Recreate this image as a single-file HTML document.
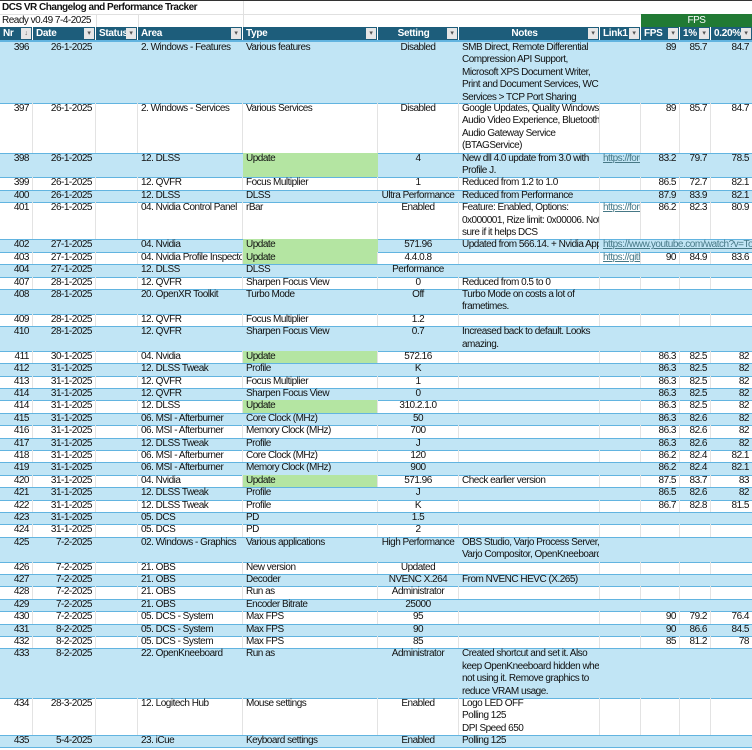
<!DOCTYPE html>
<html><head><meta charset="utf-8">
<style>
*{box-sizing:border-box;margin:0;padding:0}
body{width:752px;height:750px;overflow:hidden;background:#fff;font-family:"Liberation Sans",sans-serif;font-size:10px;color:#111;letter-spacing:-0.5px;position:relative}
.r{display:flex;position:relative;height:12.4px;border-top:1px solid #62b4e0;line-height:12.4px}
.b{background:#c1e5f5}
.w{background:#fff}
.r>div{flex:none;overflow:hidden;white-space:nowrap;padding:0 3px;border-right:1px solid transparent;margin-top:-1px}
.w>div{border-right-color:#e3e3e3!important}
.a{width:33px;text-align:right}
.d{width:63px;text-align:right}
.s{width:42px}
.e{width:105px}
.t{width:135px}
.g{width:81px;text-align:center}
.n{width:141px}
.l{width:41px}
.f{width:39px;text-align:right}
.p{width:31px;text-align:right}
.q{width:41px;text-align:right;border-right:none!important}
.u{background:#b4e5a2}
.lk{color:#467886;text-decoration:underline}
.ov{overflow:visible!important;position:relative;z-index:2}
.top{position:absolute;left:0;width:752px;height:13.5px;border-bottom:1px solid #e0e0e0;line-height:13px}
.hdr{position:absolute;left:0;top:27px;height:13px;width:752px;display:flex;background:#fff}
.hdr>div{flex:none;background:#1d5d7b;color:#fff;font-weight:bold;line-height:13px;padding:0 3px;position:relative;border-right:1px solid #fff;letter-spacing:-0.3px}
.fb{position:absolute;right:1px;top:1px;width:10px;height:11px;background:#e6e6e6;color:#555;font-size:7px;line-height:11px;text-align:center;font-weight:normal}
</style></head><body>
<div style="position:absolute;left:0;top:0;width:752px;height:1px;background:#333"></div>
<div class="top" style="top:1px;font-weight:bold;padding-left:2px">DCS VR Changelog and Performance Tracker</div>
<div class="top" style="top:14px;padding-left:2px">Ready v0.49 7-4-2025</div>
<div style="position:absolute;left:243px;top:1px;width:1px;height:26px;background:#e0e0e0"></div>
<div style="position:absolute;left:96px;top:14px;width:1px;height:13px;background:#e0e0e0"></div>
<div style="position:absolute;left:138px;top:14px;width:1px;height:13px;background:#e0e0e0"></div>
<div style="position:absolute;left:641px;top:14px;width:111px;height:13px;background:#217a34;color:#fff;text-align:center;line-height:13px">FPS</div>
<div class="hdr">
<div style="width:33px">Nr<span class="fb">↓</span></div>
<div style="width:63px">Date<span class="fb">▾</span></div>
<div style="width:42px">Status<span class="fb">▾</span></div>
<div style="width:105px">Area<span class="fb">▾</span></div>
<div style="width:135px">Type<span class="fb">▾</span></div>
<div style="width:81px;text-align:center;padding-right:12px">Setting<span class="fb">▾</span></div>
<div style="width:141px;text-align:center;padding-right:12px">Notes<span class="fb">▾</span></div>
<div style="width:41px">Link1<span class="fb">▾</span></div>
<div style="width:39px">FPS<span class="fb">▾</span></div>
<div style="width:31px">1%<span class="fb">▾</span></div>
<div style="width:41px;border-right:none">0.20%<span class="fb">▾</span></div>
</div>
<div style="position:absolute;top:40px;left:0;width:752px">
<div class="r b" style="height:63px;border-top:2px solid #62b4e0"><div class="a" style="padding-top:1px">396</div><div class="d" style="padding-top:1px">26-1-2025</div><div class="s"></div><div class="e" style="padding-top:1px">2. Windows - Features</div><div class="t" style="padding-top:1px">Various features</div><div class="g" style="padding-top:1px">Disabled</div><div class="n" style="padding-top:1px">SMB Direct, Remote Differential<br>Compression API Support,<br>Microsoft XPS Document Writer,<br>Print and Document Services, WCF<br>Services &gt; TCP Port Sharing</div><div class="l"></div><div class="f" style="padding-top:1px">89</div><div class="p" style="padding-top:1px">85.7</div><div class="q" style="padding-top:1px">84.7</div></div>
<div class="r w" style="height:49.6px"><div class="a">397</div><div class="d">26-1-2025</div><div class="s"></div><div class="e">2. Windows - Services</div><div class="t">Various Services</div><div class="g">Disabled</div><div class="n">Google Updates, Quality Windows<br>Audio Video Experience, Bluetooth<br>Audio Gateway Service<br>(BTAGService)</div><div class="l"></div><div class="f">89</div><div class="p">85.7</div><div class="q">84.7</div></div>
<div class="r b" style="height:24.8px"><div class="a">398</div><div class="d">26-1-2025</div><div class="s"></div><div class="e">12. DLSS</div><div class="t u">Update</div><div class="g">4</div><div class="n">New dll 4.0 update from 3.0 with<br>Profile J.</div><div class="l"><span class="lk">https://forums</span></div><div class="f">83.2</div><div class="p">79.7</div><div class="q">78.5</div></div>
<div class="r w"><div class="a">399</div><div class="d">26-1-2025</div><div class="s"></div><div class="e">12. QVFR</div><div class="t">Focus Multiplier</div><div class="g">1</div><div class="n">Reduced from 1.2 to 1.0</div><div class="l"></div><div class="f">86.5</div><div class="p">72.7</div><div class="q">82.1</div></div>
<div class="r b"><div class="a">400</div><div class="d">26-1-2025</div><div class="s"></div><div class="e">12. DLSS</div><div class="t">DLSS</div><div class="g" style="padding:0">Ultra Performance</div><div class="n">Reduced from Performance</div><div class="l"></div><div class="f">87.9</div><div class="p">83.9</div><div class="q">82.1</div></div>
<div class="r w" style="height:37.2px"><div class="a">401</div><div class="d">26-1-2025</div><div class="s"></div><div class="e">04. Nvidia Control Panel</div><div class="t">rBar</div><div class="g">Enabled</div><div class="n">Feature: Enabled, Options:<br>0x000001, Rize limit: 0x00006. Not<br>sure if it helps DCS</div><div class="l"><span class="lk">https://forums</span></div><div class="f">86.2</div><div class="p">82.3</div><div class="q">80.9</div></div>
<div class="r b"><div class="a">402</div><div class="d">27-1-2025</div><div class="s"></div><div class="e">04. Nvidia</div><div class="t u">Update</div><div class="g">571.96</div><div class="n">Updated from 566.14.  + Nvidia App</div><div class="l ov"><span class="lk">https://www.youtube.com/watch?v=To</span></div><div class="f"></div><div class="p"></div><div class="q"></div></div>
<div class="r w"><div class="a">403</div><div class="d">27-1-2025</div><div class="s"></div><div class="e" style="padding-right:0">04. Nvidia Profile Inspector</div><div class="t u">Update</div><div class="g">4.4.0.8</div><div class="n"></div><div class="l"><span class="lk">https://github</span></div><div class="f">90</div><div class="p">84.9</div><div class="q">83.6</div></div>
<div class="r b"><div class="a">404</div><div class="d">27-1-2025</div><div class="s"></div><div class="e">12. DLSS</div><div class="t">DLSS</div><div class="g">Performance</div><div class="n"></div><div class="l"></div><div class="f"></div><div class="p"></div><div class="q"></div></div>
<div class="r w"><div class="a">407</div><div class="d">28-1-2025</div><div class="s"></div><div class="e">12. QVFR</div><div class="t">Sharpen Focus View</div><div class="g">0</div><div class="n">Reduced from 0.5 to 0</div><div class="l"></div><div class="f"></div><div class="p"></div><div class="q"></div></div>
<div class="r b" style="height:24.8px"><div class="a">408</div><div class="d">28-1-2025</div><div class="s"></div><div class="e">20. OpenXR Toolkit</div><div class="t">Turbo Mode</div><div class="g">Off</div><div class="n">Turbo Mode on costs a lot of<br>frametimes.</div><div class="l"></div><div class="f"></div><div class="p"></div><div class="q"></div></div>
<div class="r w"><div class="a">409</div><div class="d">28-1-2025</div><div class="s"></div><div class="e">12. QVFR</div><div class="t">Focus Multiplier</div><div class="g">1.2</div><div class="n"></div><div class="l"></div><div class="f"></div><div class="p"></div><div class="q"></div></div>
<div class="r b" style="height:24.8px"><div class="a">410</div><div class="d">28-1-2025</div><div class="s"></div><div class="e">12. QVFR</div><div class="t">Sharpen Focus View</div><div class="g">0.7</div><div class="n">Increased back to default. Looks<br>amazing.</div><div class="l"></div><div class="f"></div><div class="p"></div><div class="q"></div></div>
<div class="r w"><div class="a">411</div><div class="d">30-1-2025</div><div class="s"></div><div class="e">04. Nvidia</div><div class="t u">Update</div><div class="g">572.16</div><div class="n"></div><div class="l"></div><div class="f">86.3</div><div class="p">82.5</div><div class="q">82</div></div>
<div class="r b"><div class="a">412</div><div class="d">31-1-2025</div><div class="s"></div><div class="e">12. DLSS Tweak</div><div class="t">Profile</div><div class="g">K</div><div class="n"></div><div class="l"></div><div class="f">86.3</div><div class="p">82.5</div><div class="q">82</div></div>
<div class="r w"><div class="a">413</div><div class="d">31-1-2025</div><div class="s"></div><div class="e">12. QVFR</div><div class="t">Focus Multiplier</div><div class="g">1</div><div class="n"></div><div class="l"></div><div class="f">86.3</div><div class="p">82.5</div><div class="q">82</div></div>
<div class="r b"><div class="a">414</div><div class="d">31-1-2025</div><div class="s"></div><div class="e">12. QVFR</div><div class="t">Sharpen Focus View</div><div class="g">0</div><div class="n"></div><div class="l"></div><div class="f">86.3</div><div class="p">82.5</div><div class="q">82</div></div>
<div class="r w"><div class="a">414</div><div class="d">31-1-2025</div><div class="s"></div><div class="e">12. DLSS</div><div class="t u">Update</div><div class="g">310.2.1.0</div><div class="n"></div><div class="l"></div><div class="f">86.3</div><div class="p">82.5</div><div class="q">82</div></div>
<div class="r b"><div class="a">415</div><div class="d">31-1-2025</div><div class="s"></div><div class="e">06. MSI - Afterburner</div><div class="t">Core Clock (MHz)</div><div class="g">50</div><div class="n"></div><div class="l"></div><div class="f">86.3</div><div class="p">82.6</div><div class="q">82</div></div>
<div class="r w"><div class="a">416</div><div class="d">31-1-2025</div><div class="s"></div><div class="e">06. MSI - Afterburner</div><div class="t">Memory Clock (MHz)</div><div class="g">700</div><div class="n"></div><div class="l"></div><div class="f">86.3</div><div class="p">82.6</div><div class="q">82</div></div>
<div class="r b"><div class="a">417</div><div class="d">31-1-2025</div><div class="s"></div><div class="e">12. DLSS Tweak</div><div class="t">Profile</div><div class="g">J</div><div class="n"></div><div class="l"></div><div class="f">86.3</div><div class="p">82.6</div><div class="q">82</div></div>
<div class="r w"><div class="a">418</div><div class="d">31-1-2025</div><div class="s"></div><div class="e">06. MSI - Afterburner</div><div class="t">Core Clock (MHz)</div><div class="g">120</div><div class="n"></div><div class="l"></div><div class="f">86.2</div><div class="p">82.4</div><div class="q">82.1</div></div>
<div class="r b"><div class="a">419</div><div class="d">31-1-2025</div><div class="s"></div><div class="e">06. MSI - Afterburner</div><div class="t">Memory Clock (MHz)</div><div class="g">900</div><div class="n"></div><div class="l"></div><div class="f">86.2</div><div class="p">82.4</div><div class="q">82.1</div></div>
<div class="r w"><div class="a">420</div><div class="d">31-1-2025</div><div class="s"></div><div class="e">04. Nvidia</div><div class="t u">Update</div><div class="g">571.96</div><div class="n">Check earlier version</div><div class="l"></div><div class="f">87.5</div><div class="p">83.7</div><div class="q">83</div></div>
<div class="r b"><div class="a">421</div><div class="d">31-1-2025</div><div class="s"></div><div class="e">12. DLSS Tweak</div><div class="t">Profile</div><div class="g">J</div><div class="n"></div><div class="l"></div><div class="f">86.5</div><div class="p">82.6</div><div class="q">82</div></div>
<div class="r w"><div class="a">422</div><div class="d">31-1-2025</div><div class="s"></div><div class="e">12. DLSS Tweak</div><div class="t">Profile</div><div class="g">K</div><div class="n"></div><div class="l"></div><div class="f">86.7</div><div class="p">82.8</div><div class="q">81.5</div></div>
<div class="r b"><div class="a">423</div><div class="d">31-1-2025</div><div class="s"></div><div class="e">05. DCS</div><div class="t">PD</div><div class="g">1.5</div><div class="n"></div><div class="l"></div><div class="f"></div><div class="p"></div><div class="q"></div></div>
<div class="r w"><div class="a">424</div><div class="d">31-1-2025</div><div class="s"></div><div class="e">05. DCS</div><div class="t">PD</div><div class="g">2</div><div class="n"></div><div class="l"></div><div class="f"></div><div class="p"></div><div class="q"></div></div>
<div class="r b" style="height:24.8px"><div class="a">425</div><div class="d">7-2-2025</div><div class="s"></div><div class="e">02. Windows - Graphics</div><div class="t">Various applications</div><div class="g" style="padding:0">High Performance</div><div class="n">OBS Studio, Varjo Process Server,<br>Varjo Compositor, OpenKneeboard</div><div class="l"></div><div class="f"></div><div class="p"></div><div class="q"></div></div>
<div class="r w"><div class="a">426</div><div class="d">7-2-2025</div><div class="s"></div><div class="e">21. OBS</div><div class="t">New version</div><div class="g">Updated</div><div class="n"></div><div class="l"></div><div class="f"></div><div class="p"></div><div class="q"></div></div>
<div class="r b"><div class="a">427</div><div class="d">7-2-2025</div><div class="s"></div><div class="e">21. OBS</div><div class="t">Decoder</div><div class="g">NVENC X.264</div><div class="n">From NVENC HEVC (X.265)</div><div class="l"></div><div class="f"></div><div class="p"></div><div class="q"></div></div>
<div class="r w"><div class="a">428</div><div class="d">7-2-2025</div><div class="s"></div><div class="e">21. OBS</div><div class="t">Run as</div><div class="g">Administrator</div><div class="n"></div><div class="l"></div><div class="f"></div><div class="p"></div><div class="q"></div></div>
<div class="r b"><div class="a">429</div><div class="d">7-2-2025</div><div class="s"></div><div class="e">21. OBS</div><div class="t">Encoder Bitrate</div><div class="g">25000</div><div class="n"></div><div class="l"></div><div class="f"></div><div class="p"></div><div class="q"></div></div>
<div class="r w"><div class="a">430</div><div class="d">7-2-2025</div><div class="s"></div><div class="e">05. DCS - System</div><div class="t">Max FPS</div><div class="g">95</div><div class="n"></div><div class="l"></div><div class="f">90</div><div class="p">79.2</div><div class="q">76.4</div></div>
<div class="r b"><div class="a">431</div><div class="d">8-2-2025</div><div class="s"></div><div class="e">05. DCS - System</div><div class="t">Max FPS</div><div class="g">90</div><div class="n"></div><div class="l"></div><div class="f">90</div><div class="p">86.6</div><div class="q">84.5</div></div>
<div class="r w"><div class="a">432</div><div class="d">8-2-2025</div><div class="s"></div><div class="e">05. DCS - System</div><div class="t">Max FPS</div><div class="g">85</div><div class="n"></div><div class="l"></div><div class="f">85</div><div class="p">81.2</div><div class="q">78</div></div>
<div class="r b" style="height:49.6px"><div class="a">433</div><div class="d">8-2-2025</div><div class="s"></div><div class="e">22. OpenKneeboard</div><div class="t">Run as</div><div class="g">Administrator</div><div class="n">Created shortcut and set it. Also<br>keep OpenKneeboard hidden when<br>not using it. Remove graphics to<br>reduce VRAM usage.</div><div class="l"></div><div class="f"></div><div class="p"></div><div class="q"></div></div>
<div class="r w" style="height:37.2px"><div class="a">434</div><div class="d">28-3-2025</div><div class="s"></div><div class="e">12. Logitech Hub</div><div class="t">Mouse settings</div><div class="g">Enabled</div><div class="n">Logo LED OFF<br>Polling 125<br>DPI Speed 650</div><div class="l"></div><div class="f"></div><div class="p"></div><div class="q"></div></div>
<div class="r b" style="border-bottom:1px solid #62b4e0;height:13.4px"><div class="a">435</div><div class="d">5-4-2025</div><div class="s"></div><div class="e">23. iCue</div><div class="t">Keyboard settings</div><div class="g">Enabled</div><div class="n">Polling 125</div><div class="l"></div><div class="f"></div><div class="p"></div><div class="q"></div></div>
</div>
</body></html>
